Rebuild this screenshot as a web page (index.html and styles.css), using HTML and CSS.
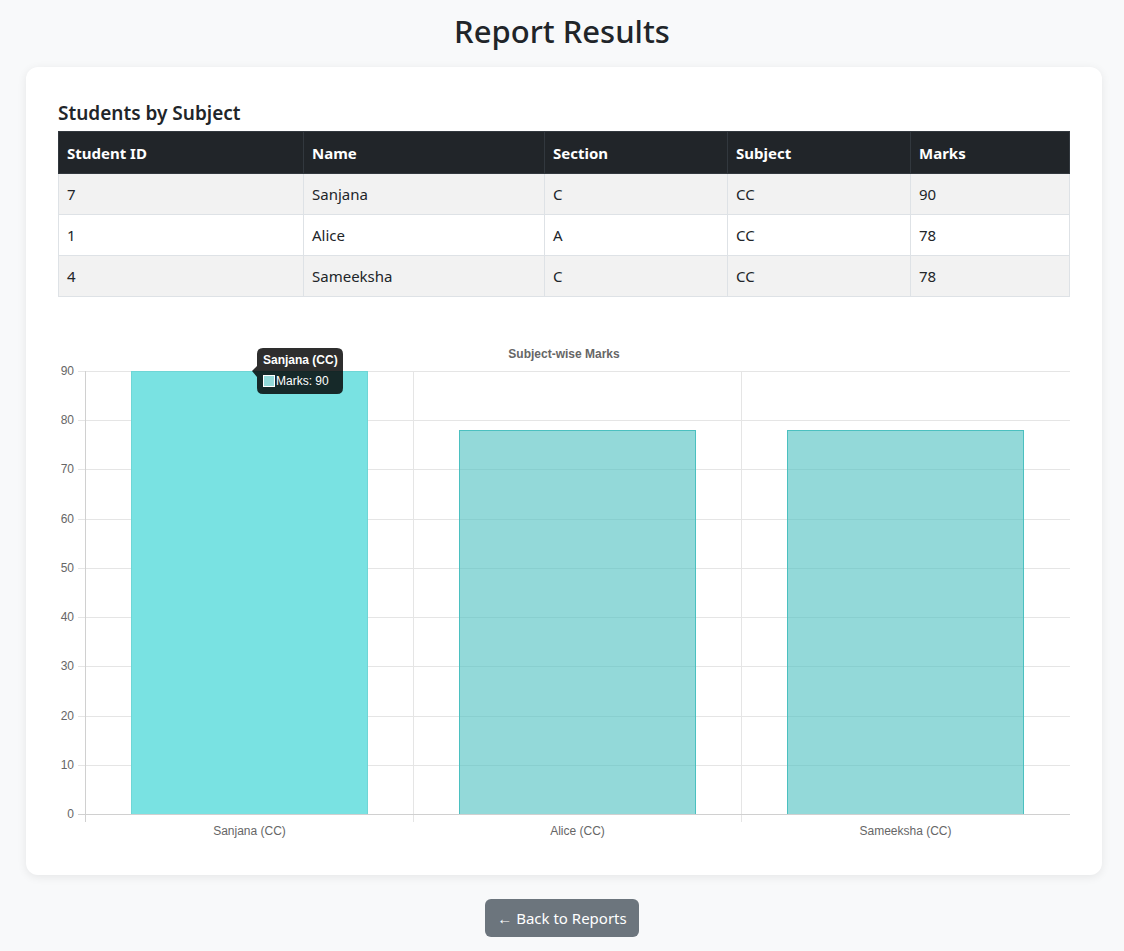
FILE: index.html
```html
<!DOCTYPE html>
<html lang="en">
<head>
<meta charset="utf-8">
<title>Report Results</title>
<link rel="stylesheet" href="styles.css">
</head>
<body>
<h1 class="page-title">Report Results</h1>
<main class="card">
  <h2 class="section-title">Students by Subject</h2>
  <table class="data-table">
    <thead>
      <tr>
        <th class="col-id">Student ID</th>
        <th class="col-name">Name</th>
        <th class="col-section">Section</th>
        <th class="col-subject">Subject</th>
        <th>Marks</th>
      </tr>
    </thead>
    <tbody>
      <tr><td>7</td><td>Sanjana</td><td>C</td><td>CC</td><td>90</td></tr>
      <tr><td>1</td><td>Alice</td><td>A</td><td>CC</td><td>78</td></tr>
      <tr><td>4</td><td>Sameeksha</td><td>C</td><td>CC</td><td>78</td></tr>
    </tbody>
  </table>
  <div class="chart-wrap">
    <svg class="chart" width="1012" height="506" viewBox="0 0 1012 506">
      <text class="chart-title" x="506" y="21" text-anchor="middle">Subject-wise Marks</text>
      <g class="grid">
        <line x1="20" y1="34.5" x2="1012" y2="34.5"/>
        <line x1="20" y1="83.5" x2="1012" y2="83.5"/>
        <line x1="20" y1="132.5" x2="1012" y2="132.5"/>
        <line x1="20" y1="182.5" x2="1012" y2="182.5"/>
        <line x1="20" y1="231.5" x2="1012" y2="231.5"/>
        <line x1="20" y1="280.5" x2="1012" y2="280.5"/>
        <line x1="20" y1="329.5" x2="1012" y2="329.5"/>
        <line x1="20" y1="379.5" x2="1012" y2="379.5"/>
        <line x1="20" y1="428.5" x2="1012" y2="428.5"/>
        <line x1="27.5" y1="34" x2="27.5" y2="485"/>
        <line x1="355.5" y1="34" x2="355.5" y2="485"/>
        <line x1="683.5" y1="34" x2="683.5" y2="485"/>
      </g>
      <rect class="bar bar-hover" x="73.5" y="34.5" width="236" height="443"/>
      <rect class="bar" x="401.5" y="93.5" width="236" height="384"/>
      <rect class="bar" x="729.5" y="93.5" width="236" height="384"/>
      <line class="axis" x1="20" y1="477.5" x2="1012" y2="477.5"/>
      <line class="axis" x1="27.5" y1="34" x2="27.5" y2="485"/>
      <g class="tick-labels">
        <text x="16" y="38" text-anchor="end">90</text>
        <text x="16" y="87" text-anchor="end">80</text>
        <text x="16" y="136" text-anchor="end">70</text>
        <text x="16" y="186" text-anchor="end">60</text>
        <text x="16" y="235" text-anchor="end">50</text>
        <text x="16" y="284" text-anchor="end">40</text>
        <text x="16" y="333" text-anchor="end">30</text>
        <text x="16" y="383" text-anchor="end">20</text>
        <text x="16" y="432" text-anchor="end">10</text>
        <text x="16" y="481" text-anchor="end">0</text>
        <text x="191.5" y="498" text-anchor="middle">Sanjana (CC)</text>
        <text x="519.5" y="498" text-anchor="middle">Alice (CC)</text>
        <text x="847.5" y="498" text-anchor="middle">Sameeksha (CC)</text>
      </g>
      <g class="tooltip">
        <path d="M205 11 H279 Q285 11 285 17 V51 Q285 57 279 57 H205 Q199 57 199 51 V40 L194 34 L199 29 V17 Q199 11 205 11 Z"/>
        <text class="tooltip-title" x="205" y="27">Sanjana (CC)</text>
        <rect class="tooltip-swatch" x="205.5" y="38.5" width="11" height="11"/>
        <text class="tooltip-body" x="218" y="48">Marks: 90</text>
      </g>
    </svg>
  </div>
</main>
<div class="actions">
  <a class="btn-back" href="#">← Back to Reports</a>
</div>
</body>
</html>
```
FILE: styles.css
```css
* { box-sizing: border-box; }
body {
  margin: 0;
  background: #f8f9fa;
  color: #212529;
  font-family: "Noto Sans", "Open Sans", sans-serif;
  font-size: 16px;
  line-height: 1.5;
}
.page-title {
  margin: 0 0 8px;
  padding-top: 9px;
  text-align: center;
  font-size: 31px;
  font-weight: 500;
  line-height: 44px;
  height: 59px;
}
.card {
  margin: 0 22px 0 26px;
  background: #fff;
  border-radius: 12px;
  box-shadow: 0 2px 10px rgba(0,0,0,0.08);
  padding: 32px 32px 32px;
}
.section-title {
  margin: 0 0 4px;
  font-size: 19px;
  font-weight: 600;
  line-height: 28px;
}
.data-table {
  width: 100%;
  border-collapse: collapse;
  table-layout: fixed;
}
.data-table th, .data-table td {
  text-align: left;
  padding: 8px 8px;
  border: 1px solid #dee2e6;
  line-height: 24px;
  font-size: 15px;
}
.data-table th {
  background: #212529;
  color: #fff;
  font-weight: 700;
  border-color: #32383e;
  padding: 9px 8px 8px;
}
.col-id { width: 245px; }
.col-name { width: 241px; }
.col-section { width: 183px; }
.col-subject { width: 183px; }
.data-table tbody tr:nth-child(odd) td { background: #f2f2f2; }
.chart-wrap {
  margin-top: 40px;
  height: 506px;
}
.chart { display: block; font-family: "Liberation Sans", Arial, sans-serif; }
.chart-title { font-size: 12px; font-weight: 700; fill: #666; }
.grid line { stroke: #e5e5e5; stroke-width: 1; }
.axis { stroke: #d0d0d0; stroke-width: 1; }
.bar { fill: rgba(75,192,192,0.6); stroke: rgb(75,192,192); stroke-width: 1; }
.bar-hover { fill: #79e2e2; stroke: #6fd6d6; }
.tick-labels text { font-size: 12px; fill: #666; }
.tooltip path { fill: rgba(0,0,0,0.82); }
.tooltip-title { font-size: 12px; font-weight: 700; fill: #fff; }
.tooltip-body { font-size: 12px; fill: #fff; }
.tooltip-swatch { fill: #93d9d9; stroke: #fff; stroke-width: 1; }
.actions {
  display: flex;
  justify-content: center;
  padding: 24px 0 14px;
}
.btn-back {
  display: inline-block;
  background: #6c757d;
  color: #fff;
  text-decoration: none;
  border-radius: 6px;
  padding: 6px 12px;
  font-size: 15px;
  line-height: 26px;
}
```
